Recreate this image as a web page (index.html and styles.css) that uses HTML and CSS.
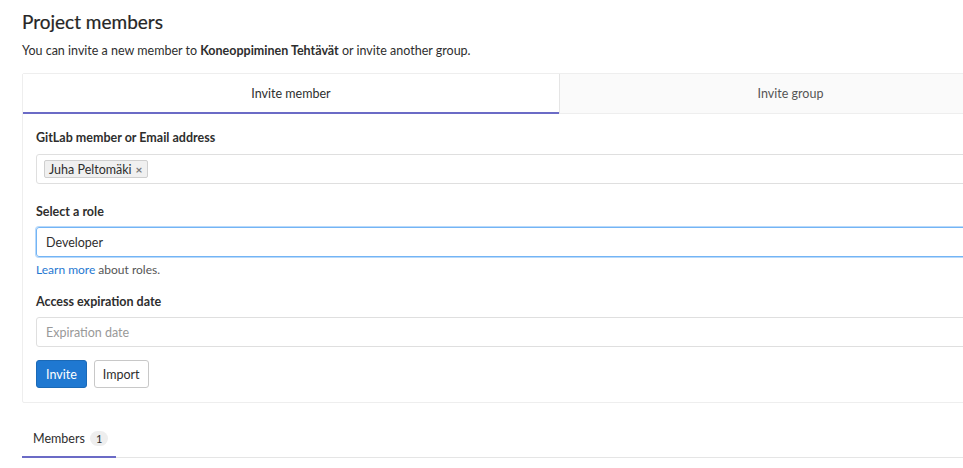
FILE: index.html
```html
<!DOCTYPE html>
<html>
<head>
<meta charset="utf-8">
<link rel="stylesheet" href="styles.css">
</head>
<body>
<div class="page">
  <h1 class="title">Project members</h1>
  <p class="lead">You can invite a new member to <strong>Koneoppiminen Tehtävät</strong> or invite another group.</p>
  <div class="card">
    <div class="tabs">
      <div class="tab active">Invite member</div>
      <div class="tab">Invite group</div>
    </div>
    <div class="card-body">
      <label class="label">GitLab member or Email address</label>
      <div class="input tokens"><span class="token">Juha Peltomäki <span class="x">×</span></span></div>
      <label class="label l2">Select a role</label>
      <div class="input select">Developer</div>
      <div class="help"><a class="link">Learn more</a> about roles.</div>
      <label class="label l3">Access expiration date</label>
      <div class="input placeholder">Expiration date</div>
      <div class="actions">
        <button class="btn primary">Invite</button>
        <button class="btn">Import</button>
      </div>
    </div>
  </div>
  <div class="subtabs">
    <div class="subtab">Members <span class="badge">1</span></div>
  </div>
</div>
</body>
</html>
```
FILE: styles.css
```css
html, body { margin: 0; padding: 0; background: #fff; overflow: hidden; }
body { font-family: "Lato", "Noto Sans", sans-serif; color: #2e2e2e; }
.page { padding: 10px 0 0 22px; width: 1000px; }
.title { margin: 0; font-size: 19px; line-height: 24px; font-weight: 400; color: #262626; -webkit-text-stroke: 0.2px #262626; }
.lead { margin: 8px 0 0; font-size: 12.5px; line-height: 18px; color: #2e2e2e; }
.lead strong { font-weight: 700; }
.card { margin-top: 13px; border: 1px solid #eeeeee; border-radius: 2px; }
.tabs { display: flex; height: 40px; }
.tab { flex: 0 0 536px; display: flex; align-items: center; justify-content: center; font-size: 12.5px; color: #555; background: #fafafa; border-bottom: 1px solid #eeeeee; box-sizing: border-box; }
.tab + .tab { flex: 1; border-left: 1px solid #e5e5e5; }
.tab.active { background: #fff; color: #2e2e2e; font-weight: 400; border-bottom: 2px solid #6b6bc6; padding-top: 1px; }
.card-body { padding: 15px 0 14px 13px; display: flex; flex-direction: column; align-items: flex-start; }
.label { display: block; font-size: 12.5px; line-height: 18px; font-weight: 700; color: #2e2e2e; }
.l2 { margin-top: 19px; }
.l3 { margin-top: 14px; }
.input { margin-top: 7px; width: 960px; height: 30px; box-sizing: border-box; border: 1px solid #dfdfdf; border-radius: 3px; display: flex; align-items: center; padding: 0 9px; font-size: 12.5px; color: #2e2e2e; }
.tokens { padding: 0 7px; }
.token { display: inline-flex; align-items: center; height: 18px; box-sizing: border-box; padding: 0 4px; border: 1px solid #cfcfcf; background: #f0f0f0; border-radius: 2px; font-size: 12.5px; color: #2e2e2e; }
.x { margin-left: 4px; font-size: 12px; color: #777; font-weight: 700; }
.select { margin-top: 6px; border: 1px solid #73b4f5; box-shadow: 0 0 0 1px #b8d9fa; }
.help { margin-top: 4px; font-size: 12px; line-height: 18px; color: #555; }
.link { color: #1f78d1; text-decoration: none; }
.placeholder { margin-top: 6px; color: #999; }
.actions { margin-top: 13px; display: flex; gap: 7px; }
.btn { height: 28px; box-sizing: border-box; padding: 0 8px; font-family: inherit; font-size: 12.5px; border: 1px solid #c8c8c8; background: #fff; color: #2e2e2e; border-radius: 3px; }
.btn.primary { background: #1f78d1; border-color: #1b69b6; color: #fff; padding: 0 9px; }
.subtabs { margin-top: 27px; border-bottom: 1px solid #e5e5e5; display: flex; }
.subtab { padding: 0 8px 8px 11px; font-size: 12.5px; line-height: 18px; color: #2e2e2e; border-bottom: 2px solid #6b6bc6; margin-bottom: -1px; white-space: nowrap; }
.badge { display: inline-block; background: #eeeeee; border-radius: 9px; padding: 0 6px; font-size: 11px; line-height: 15px; margin-left: 2px; }
```
